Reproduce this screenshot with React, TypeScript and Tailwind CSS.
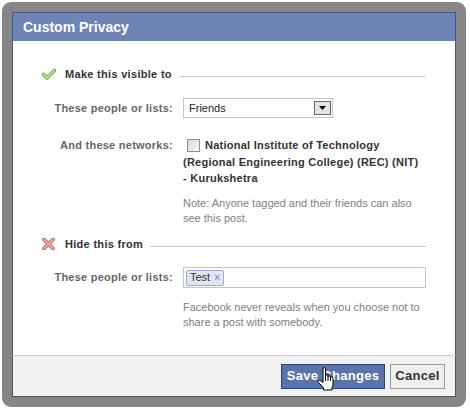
import React from "react";

const font = { fontFamily: '"Liberation Sans", Arial, sans-serif' };

function CheckIcon() {
  return (
    <svg width="14" height="11" viewBox="0 0 14 11" className="shrink-0">
      <polyline points="1.5,5.5 5,9 12.5,1.5" fill="none" stroke="#6aa83f" strokeWidth="3.6" strokeLinejoin="round" strokeLinecap="round" />
      <polyline points="1.5,5.5 5,9 12.5,1.5" fill="none" stroke="#b5e38a" strokeWidth="1.8" strokeLinejoin="round" strokeLinecap="round" />
    </svg>
  );
}

function CrossIcon() {
  return (
    <svg width="13" height="12" viewBox="0 0 13 12" className="shrink-0">
      <path d="M2 1.5 L11 10.5 M11 1.5 L2 10.5" fill="none" stroke="#c0555b" strokeWidth="3.6" strokeLinecap="round" />
      <path d="M2 1.5 L11 10.5 M11 1.5 L2 10.5" fill="none" stroke="#f0a8aa" strokeWidth="1.8" strokeLinecap="round" />
    </svg>
  );
}

function HandCursor() {
  return (
    <svg width="18" height="24" viewBox="0 0 18 24" className="absolute left-[36px] top-[4px]">
      <path
        d="M6 2 Q6 0.5 7.25 0.5 Q8.5 0.5 8.5 2 V9 Q8.5 7.8 9.75 7.8 Q11 7.8 11 9 V10 Q11 8.8 12.25 8.8 Q13.5 8.8 13.5 10 V11 Q13.5 9.8 14.75 9.8 Q16 9.8 16 11 V17 Q16 19 15 20.5 V23 H6.5 V20.5 Q5.5 19.5 4 18 L1.5 15.5 Q0.5 14.3 1.5 13.5 Q2.5 12.8 3.8 13.8 L6 15.5 Z"
        fill="#fff"
        stroke="#000"
        strokeWidth="1"
        strokeLinejoin="round"
      />
      <path d="M8.5 9 V14 M11 10 V14 M13.5 11 V14" stroke="#000" strokeWidth="1" />
    </svg>
  );
}

function SectionHeader({ icon, title }: { icon: React.ReactNode; title: string }) {
  return (
    <div className="flex h-[16px] items-center">
      <div className="flex w-[13px] items-center justify-center">{icon}</div>
      <span className="ml-[10px] text-[11px] font-bold tracking-[0.3px] text-[#333]">{title}</span>
      <div className="ml-[7px] mt-[4px] h-px flex-1 bg-[#cccccc]" />
    </div>
  );
}

function Label({ children }: { children: React.ReactNode }) {
  return (
    <div className="w-[131px] shrink-0 text-right text-[11px] font-bold tracking-[0.25px] text-[#666]">
      {children}
    </div>
  );
}

export default function App() {
  return (
    <div className="h-[410px] w-[470px] bg-white p-[2px]" style={font}>
      <div className="h-[405px] w-[464px] rounded-[9px] bg-[#868686] p-[10px]">
        <div className="flex h-full flex-col">
          <div className="flex h-[29px] items-center border border-b-0 border-[#3b5998] bg-[#6d84b4] pl-[10px] text-[14px] font-bold text-white">
            Custom Privacy
          </div>

          <div className="flex-1 border-x border-[#555] bg-white px-[29px] pt-[25px]">
            <SectionHeader icon={<CheckIcon />} title="Make this visible to" />

            <div className="mt-[16px] flex h-[20px] items-center gap-[10px]">
              <Label>These people or lists:</Label>
              <div className="flex h-[20px] w-[150px] items-center border border-[#bdc7d8] pl-[5px] text-[11px] text-[#222]">
                Friends
                <div className="ml-auto mr-[1px] flex h-[14px] w-[17px] items-center justify-center border border-[#666] bg-[#e4e4e4]">
                  <svg width="7" height="4" viewBox="0 0 7 4">
                    <path d="M0 0 H7 L3.5 4 Z" fill="#000" />
                  </svg>
                </div>
              </div>
            </div>

            <div className="mt-[18px] flex gap-[10px]">
              <div className="flex h-[18px] items-center">
                <Label>And these networks:</Label>
              </div>
              <div className="text-[11px] font-bold tracking-[0.25px] text-[#333]">
                <div className="flex h-[18px] items-center">
                  <div className="ml-[4px] h-[13px] w-[13px] border border-[#8e8f8f] bg-gradient-to-br from-[#d6d6d6] to-[#fafafa]" />
                  <span className="ml-[5px]">National Institute of Technology</span>
                </div>
                <div className="leading-[16px]">(Regional Engineering College) (REC) (NIT)</div>
                <div className="leading-[16px]">- Kurukshetra</div>
              </div>
            </div>

            <div className="ml-[141px] mt-[10px] w-[240px] text-[11px] leading-[15px] text-[#808080]">
              Note: Anyone tagged and their friends can also see this post.
            </div>

            <div className="mt-[10px]">
              <SectionHeader icon={<CrossIcon />} title="Hide this from" />
            </div>

            <div className="mt-[15px] flex h-[21px] items-center gap-[10px]">
              <Label>These people or lists:</Label>
              <div className="flex h-[21px] flex-1 items-center border border-[#bdc7d8] pl-[2px]">
                <div className="flex h-[16px] items-center gap-[4px] rounded-[2px] border border-[#9daccc] bg-[#e2e6f0] px-[3px] text-[11px] text-[#333]">
                  Test
                  <span className="text-[10px] font-bold leading-none text-[#8b9bc3]">×</span>
                </div>
              </div>
            </div>

            <div className="ml-[141px] mt-[12px] w-[240px] text-[11px] leading-[15px] text-[#808080]">
              Facebook never reveals when you choose not to share a post with somebody.
            </div>
          </div>

          <div className="flex h-[42px] items-center justify-end gap-[5px] border border-t-[#cccccc] border-x-[#555] border-b-[#555] bg-[#f2f2f2] pr-[10px]">
            <div className="relative">
              <button className="h-[25px] w-[104px] border border-[#29447e] bg-[#5b74a8] text-[13px] font-bold tracking-[0.3px] text-white">
                Save Changes
              </button>
              <HandCursor />
            </div>
            <button className="h-[25px] w-[55px] border border-[#999] bg-[#eeeeee] text-[13px] font-bold tracking-[0.3px] text-[#333]">
              Cancel
            </button>
          </div>
        </div>
      </div>
    </div>
  );
}
